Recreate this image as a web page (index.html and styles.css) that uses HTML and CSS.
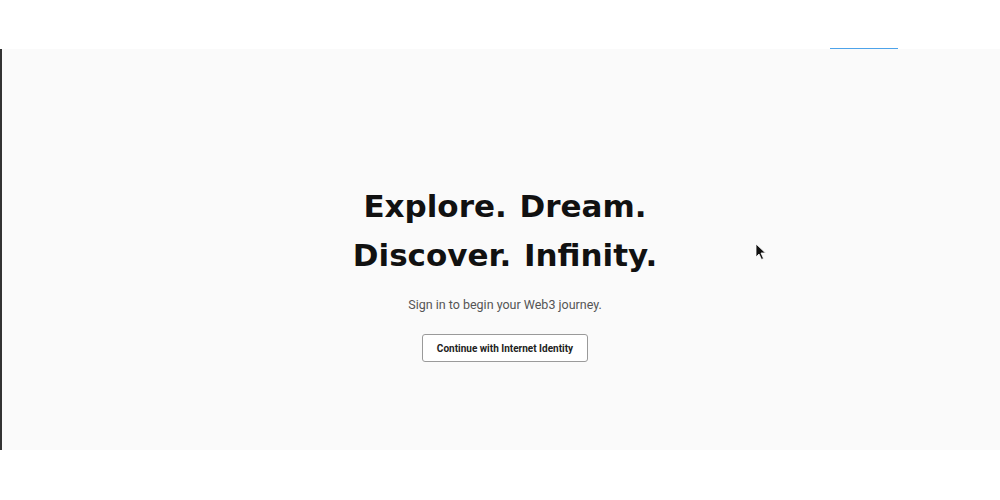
FILE: index.html
```html
<!DOCTYPE html>
<html lang="en">
<head>
<meta charset="utf-8">
<title>Explore. Dream. Discover. Infinity.</title>
<link rel="stylesheet" href="styles.css">
</head>
<body>
<header class="topbar">
  <nav class="nav">
    <span class="nav-tab"></span>
  </nav>
</header>
<main class="stage">
  <section class="hero">
    <h1 class="title">Explore. Dream.<br>Discover. Infinity.</h1>
    <p class="subtitle">Sign in to begin your Web3 journey.</p>
    <button class="login-btn" type="button">Continue with Internet Identity</button>
  </section>
  <svg class="cursor" width="12" height="18" viewBox="0 0 12 18" aria-hidden="true">
    <path d="M1 1 L1 14 L4 11 L6.5 16.5 L8.5 15.5 L6 10 L10.5 10 Z" fill="#111" stroke="#fff" stroke-width="0.8"/>
  </svg>
</main>
<footer class="bottom"></footer>
</body>
</html>
```
FILE: styles.css
```css
html, body {
  margin: 0;
  padding: 0;
  background: #ffffff;
  font-family: Roboto, "Liberation Sans", sans-serif;
}
.topbar {
  height: 49px;
  display: flex;
  justify-content: flex-end;
  align-items: flex-end;
  padding-right: 102px;
}
.nav {
  display: flex;
}
.nav-tab {
  display: block;
  width: 68px;
  height: 2px;
  background: #4da3ea;
  margin-bottom: -1px;
}
.stage {
  position: relative;
  height: 401px;
  background: #fafafa;
  border-left: 2px solid #333;
  padding-left: 8px;
  box-sizing: border-box;
  display: flex;
  justify-content: center;
}
.hero {
  display: flex;
  flex-direction: column;
  align-items: center;
  padding-top: 133px;
}
.title {
  margin: 0;
  font-family: "DejaVu Sans", sans-serif;
  font-weight: 700;
  font-size: 31px;
  line-height: 49px;
  text-align: center;
  color: #111;
  word-spacing: 2px;
}
.subtitle {
  margin: 17px 0 0;
  font-size: 12.5px;
  color: #555;
  line-height: 16px;
}
.login-btn {
  margin-top: 21px;
  height: 28px;
  padding: 0 14px;
  background: #fff;
  border: 1px solid #9a9a9a;
  border-radius: 3px;
  font-family: Roboto, "Liberation Sans", sans-serif;
  font-weight: 700;
  font-size: 10px;
  color: #222;
}
.cursor {
  position: absolute;
  left: 753px;
  top: 194px;
}
.bottom {
  height: 50px;
  background: #fff;
}
```
